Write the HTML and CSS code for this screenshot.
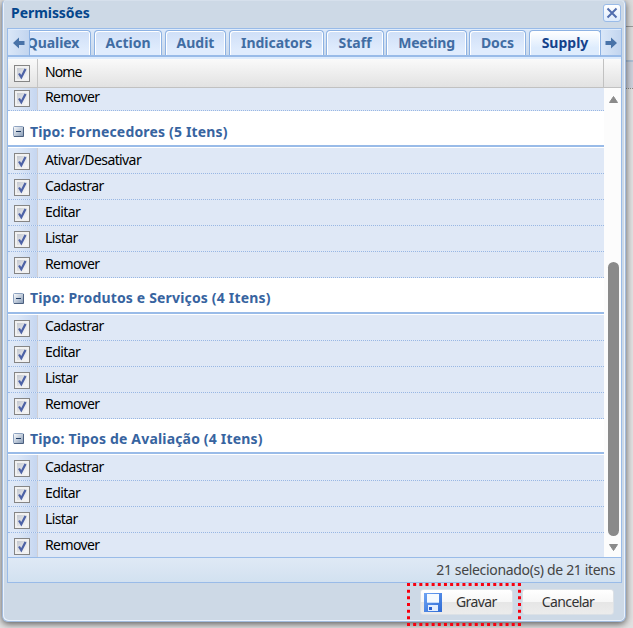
FILE: index.html
```
<!DOCTYPE html>
<html lang="pt-BR">
<head>
<meta charset="utf-8">
<title>Permissões</title>
<link rel="stylesheet" href="styles.css">
</head>
<body>
<svg width="0" height="0" class="defs">
  <defs>
    <linearGradient id="box" x1="0" y1="0" x2="1" y2="1"><stop offset="0" stop-color="#c4c8d0"/><stop offset="1" stop-color="#fafafa"/></linearGradient>
    <linearGradient id="minus" x1="0" y1="0" x2="1" y2="1"><stop offset="0" stop-color="#ffffff"/><stop offset="1" stop-color="#8499b5"/></linearGradient>
    <linearGradient id="disk" x1="0" y1="0" x2="1" y2="1"><stop offset="0" stop-color="#6fa4f4"/><stop offset="1" stop-color="#2d6ad4"/></linearGradient>
    <symbol id="check" viewBox="0 0 16 17"><rect x=".5" y=".5" width="15" height="16" fill="#f1f1f1" stroke="#858585"/><rect x="3" y="3" width="10" height="11" fill="url(#box)"/><path d="M5 8.500l2.300 3.800L11.500 4" fill="none" stroke="#4d62a6" stroke-width="2.2"/></symbol>
    <symbol id="collapse" viewBox="0 0 11 11"><rect x=".5" y=".5" width="10" height="10" rx="1" fill="url(#minus)" stroke="#8fa3c0"/><path d="M10.5 1v9.500H1" fill="none" stroke="#4c607e"/><path d="M3 5.500h5" stroke="#1f3a60"/></symbol>
  </defs>
</svg>
<div class="backdrop"></div>
<main class="window">
  <header class="titlebar">
    <h1>Permissões</h1>
    <button class="close" aria-label="Fechar"><svg width="16" height="16" viewBox="0 0 16 16"><path d="M3.500 3.500l9 9M12.500 3.500l-9 9" stroke="#526eae" stroke-width="2"/></svg></button>
  </header>
  <section class="panel">
    <nav class="tabs">
      <div class="scroller"><svg width="12" height="12" viewBox="0 0 12 12"><path d="M0 6l6-5.500v3.500h5.500v4H6v3.500z" fill="#4973a8"/></svg></div>
      <div class="strip">
        <a class="tab qualiex"><span>Qualiex</span></a><a class="tab action">Action</a><a class="tab audit">Audit</a><a class="tab indicators">Indicators</a><a class="tab staff">Staff</a><a class="tab meeting">Meeting</a><a class="tab docs">Docs</a><a class="tab supply active">Supply</a>
      </div>
      <div class="scroller right"><svg width="12" height="12" viewBox="0 0 12 12"><path d="M12 6L6 .5v3.500H.5v4H6v3.500z" fill="#4973a8"/></svg></div>
    </nav>
    <div class="head"><span class="mark"><svg><use href="#check"/></svg></span><span class="name">Nome</span><span class="end"></span></div>
    <div class="body">
      <div class="rows">
        <div class="row first"><span class="mark"><svg><use href="#check"/></svg></span><span class="name">Remover</span></div>
        <h2><svg><use href="#collapse"/></svg><span>Tipo: Fornecedores (5 Itens)</span></h2>
        <div class="row"><span class="mark"><svg><use href="#check"/></svg></span><span class="name">Ativar/Desativar</span></div>
        <div class="row"><span class="mark"><svg><use href="#check"/></svg></span><span class="name">Cadastrar</span></div>
        <div class="row"><span class="mark"><svg><use href="#check"/></svg></span><span class="name">Editar</span></div>
        <div class="row"><span class="mark"><svg><use href="#check"/></svg></span><span class="name">Listar</span></div>
        <div class="row"><span class="mark"><svg><use href="#check"/></svg></span><span class="name">Remover</span></div>
        <h2 class="raised"><svg><use href="#collapse"/></svg><span>Tipo: Produtos e Serviços (4 Itens)</span></h2>
        <div class="row raised"><span class="mark"><svg><use href="#check"/></svg></span><span class="name">Cadastrar</span></div>
        <div class="row raised"><span class="mark"><svg><use href="#check"/></svg></span><span class="name">Editar</span></div>
        <div class="row raised"><span class="mark"><svg><use href="#check"/></svg></span><span class="name">Listar</span></div>
        <div class="row raised"><span class="mark"><svg><use href="#check"/></svg></span><span class="name">Remover</span></div>
        <h2 class="raised short"><svg><use href="#collapse"/></svg><span>Tipo: Tipos de Avaliação (4 Itens)</span></h2>
        <div class="row"><span class="mark"><svg><use href="#check"/></svg></span><span class="name">Cadastrar</span></div>
        <div class="row"><span class="mark"><svg><use href="#check"/></svg></span><span class="name">Editar</span></div>
        <div class="row"><span class="mark"><svg><use href="#check"/></svg></span><span class="name">Listar</span></div>
        <div class="row"><span class="mark"><svg><use href="#check"/></svg></span><span class="name">Remover</span></div>
      </div>
      <div class="scrollbar">
        <svg width="9" height="7" viewBox="0 0 9 7"><path d="M4.500 .5L8.500 6.500h-8z" fill="#8a8a8a" stroke="#8a8a8a" stroke-linejoin="round"/></svg>
        <div class="thumb"></div>
        <svg width="9" height="7" viewBox="0 0 9 7"><path d="M4.500 6.500L.5 .5h8z" fill="#8a8a8a" stroke="#8a8a8a" stroke-linejoin="round"/></svg>
      </div>
    </div>
    <div class="status"><span>21 selecionado(s) de 21 itens</span></div>
  </section>
  <footer class="actions">
    <button class="btn save"><svg width="18" height="19" viewBox="0 0 18 19"><rect width="18" height="19" fill="url(#disk)"/><rect x="3" y="1" width="12" height="9" fill="#f5faff"/><path d="M3 9.500h12" stroke="#c4dafa"/><rect x="4" y="12" width="10" height="6" fill="#e3eeff"/><rect x="5" y="14" width="3" height="3" fill="#2a61cf"/></svg><span>Gravar</span></button>
    <button class="btn cancel">Cancelar</button>
  </footer>
</main>
<svg class="highlight" width="114" height="43" viewBox="0 0 114 43"><path d="M0 1.500h114M0 41.500h114" stroke-dasharray="3 3.160"/><path d="M1.500 0v43M112.500 0v43" stroke-dasharray="3 3.667"/></svg>
</body>
</html>
```
FILE: styles.css
```
* { box-sizing: border-box; }
body {
  margin: 0;
  width: 633px;
  height: 628px;
  overflow: hidden;
  position: relative;
  background: #e1e1e1;
  font: 14px/18px "Noto Sans", sans-serif;
  color: #000;
}
button { font: inherit; padding: 0; }
.defs { position: absolute; }
.backdrop {
  position: absolute;
  left: 620px;
  top: 0;
  width: 13px;
  height: 89px;
  border-bottom: 1px dotted #8b8b8b;
  background: linear-gradient(#dcdcdc 26px, #9b9b9b 26px, #9b9b9b 27px, #dcdcdc 27px, #dcdcdc 60px, #adbfd4 60px, #adbfd4 62px, #cdd1db 62px);
}
.window {
  position: relative;
  width: 624px;
  height: 622px;
  margin-left: 2px;
  padding: 0 4px;
  border: 1px solid #a2bbdd;
  border-top-color: #d6e0ec;
  border-radius: 4px 4px 6px 6px;
  background: #cdd9e6;
  box-shadow: inset 1px -1px 0 #eaf2fc, inset -1px 0 0 #eaf2fc, 0 2px 7px rgba(0,0,0,.6);
}
.titlebar { display: flex; justify-content: space-between; height: 27px; }
h1 { margin: 3px 0 0 4px; font-size: 14px; line-height: 18px; color: #04468c; letter-spacing: -.05px; }
.close {
  width: 18px; height: 18px; margin: 3px 0 0;
  border: 1px solid #99bbe8; border-radius: 3px;
  background: linear-gradient(#fff, #deebfc);
  display: grid; place-items: center;
}
.close svg { display: block; }
.panel {
  width: 615px; height: 555px;
  border: 1px solid #99bbe8;
  background: #fff;
}
.tabs { display: flex; height: 30px; background: #deecfd; border-top: 1px solid #deecfd; }
.scroller {
  width: 22px; height: 27px; flex: none;
  display: flex; align-items: center; justify-content: center;
  border-right: 1px solid #8db2e3; border-bottom: 2px solid #99bbe8;
  background: linear-gradient(90deg, #dae7f8, #c2d5ef);
}
.scroller.right { border-right: 0; border-left: 1px solid #8db2e3; width: 21px; }
.strip {
  display: flex; flex: 1; height: 27px; gap: 3px; overflow: hidden;
  border-bottom: 2px solid #99bbe8;
  background: linear-gradient(#dae7f8, #c9d9ec);
}
.tab {
  flex: none; height: 25px;
  border: 1px solid #8db2e3; border-bottom: 0; border-radius: 4px 4px 0 0;
  box-shadow: inset 1px 1px 0 #fff, inset -1px 0 0 #fff;
  background: linear-gradient(#cfdff7, #e0ecfd 80%);
  color: #416da3; font-weight: 700; line-height: 24px;
  display: flex; justify-content: center;
  white-space: nowrap;
}
.active { color: #15428b; background: linear-gradient(#fff, #deecfd 70%); }
.qualiex { width: 76px; margin-left: -15px; }
.qualiex span { letter-spacing: -.1px; }
.action { width: 68px; }
.audit { width: 61px; }
.indicators { width: 95px; letter-spacing: -.05px; }
.staff { width: 58px; margin-left: -1px; }
.meeting { width: 81px; margin-left: -1px; letter-spacing: -.2px; }
.docs { width: 57px; margin-left: -1px; }
.supply { width: 72px; }
.head { display: flex; height: 29px; border-bottom: 1px solid #c1c1c1; background: linear-gradient(#fafafa, #e2e2e2); }
.mark { width: 30px; flex: none; padding: 5px 0 0 6px; }
.mark svg { display: block; width: 16px; height: 17px; }
.head .mark { padding-top: 6px; border-right: 1px solid #c5c5c5; }
.name { flex: 1; padding: 3px 0 0 7px; letter-spacing: -.6px; }
.head .name { padding-top: 4px; letter-spacing: -.9px; }
.end { width: 18px; flex: none; border-left: 1px solid #c1c1c1; }
.body { display: flex; height: 469px; }
.rows { flex: 1; height: 469px; overflow: hidden; }
.row { display: flex; height: 26px; background: #dfe8f6; border-bottom: 1px dotted #98b7e4; }
.row .mark { border-right: 1px solid #d0d0d5; background: linear-gradient(90deg, #dee8f7 30%, #c5d6f0); }
.row.raised .name { padding-top: 2px; }
.first { margin-top: -3px; }
h2 {
  display: flex; gap: 6px; margin: 0 0 1px; height: 36px;
  padding: 12px 0 0 5px; border-bottom: 2px solid #99bbe8;
  color: #3764a0; font-size: 14px; line-height: 18px; white-space: nowrap;
  letter-spacing: .17px;
}
h2.raised { padding-top: 11px; }
h2.short { height: 35px; }
h2 svg { width: 11px; height: 11px; margin-top: 3px; }
h2.raised svg { margin-top: 4px; }
h2.short svg { margin-top: 3px; }
.scrollbar { width: 17px; flex: none; background: #fcfcfc; display: flex; flex-direction: column; align-items: center; padding: 8px 0 6px; }
.scrollbar svg { margin-left: 2px; }
.thumb { width: 11px; height: 274px; margin: auto 0 8px 2px; border-radius: 6px; background: #8a8a8a; }
.status {
  height: 25px; border-top: 1px solid #99bbe8;
  background: linear-gradient(#dfe9f5, #d2e1f0);
  padding: 3px 6px 0 0; text-align: right; color: #444; letter-spacing: -.34px;
}
.actions { display: flex; justify-content: flex-end; gap: 9px; padding: 6px 7px 0 0; }
.btn {
  display: flex; align-items: center; justify-content: center;
  height: 26px; border: 1px solid #dce1e6; border-radius: 3px; color: #333;
  background: linear-gradient(#fff, #f7f7f7 48%, #e6e6e6 52%, #ececec);
  letter-spacing: -.6px;
}
.save { width: 93px; gap: 14px; justify-content: flex-start; padding-left: 3px; }
.cancel { width: 92px; }
.highlight { position: absolute; left: 407px; top: 583px; fill: none; stroke: #f8000f; stroke-width: 3; }
```
